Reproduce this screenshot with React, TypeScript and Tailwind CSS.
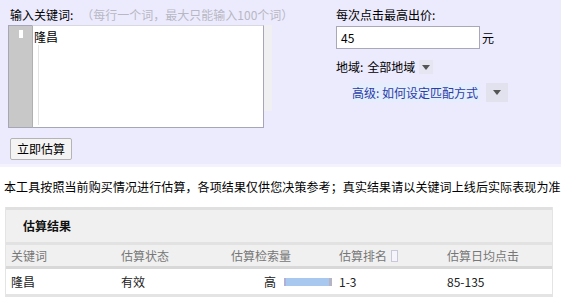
import React from "react";

const font = { fontFamily: '"Noto Sans CJK SC", "Noto Sans", sans-serif' };

function Arrow() {
  return (
    <svg width="8" height="5" viewBox="0 0 8 5" className="block">
      <path d="M0 0 L8 0 L4 5 Z" fill="#555" />
    </svg>
  );
}

export default function App() {
  return (
    <div className="w-[561px] h-[306px] overflow-hidden bg-white text-[12px] leading-[14px] text-black" style={font}>
      {/* top form area */}
      <div className="h-[167px] bg-[#ecebfd] flex pl-[8px] pt-[7px] border-b-[3px] border-[#f3f2fe]">
        <div className="w-[328px] flex flex-col">
          <div className="flex items-center h-[16px] pl-[2px]">
            <span>输入关键词:</span>
            <span className="ml-[8px] text-[#b8b8c4]">（每行一个词，最大只能输入100个词）</span>
          </div>
          <div className="mt-[2px] flex items-start">
            <div className="w-[24px] h-[103px] bg-[#c8c8c8] border border-r-0 border-[#a6a6b8] pt-[4px] flex justify-center">
              <div className="w-[4px] h-[8px] bg-white" />
            </div>
            <div className="w-[232px] h-[103px] bg-[#ffffff] border border-l-[#b0b0b0] border-[#a6a6b8] border-t-[#d8d8e0] pt-[4px] pl-[1px]">
              <div>隆昌</div>
              <div className="ml-[4px] mt-[1px] w-px h-[80px] bg-[#e4e4e4]" />
            </div>
            <div className="w-[8px] h-[86px] bg-[#f0f0f2]" />
          </div>
          <div className="mt-[10px] pl-[2px]">
            <button className="h-[22px] px-[6px] border border-[#b4b4b4] bg-[#f4f4f4] rounded-[2px] text-[12px] leading-[14px] text-black" style={font}>
              立即估算
            </button>
          </div>
        </div>
        <div className="flex flex-col">
          <div className="h-[16px] flex items-center">每次点击最高出价:</div>
          <div className="mt-[3px] flex items-center">
            <div className="w-[144px] h-[23px] border border-[#a8a8b8] bg-white flex items-center pl-[4px]">45</div>
            <span className="ml-[2px]">元</span>
          </div>
          <div className="mt-[10px] flex items-center h-[16px]">
            <span>地域:</span>
            <span className="ml-[4px]">全部地域</span>
            <span className="ml-[4px] w-[14px] h-[14px] flex items-center justify-center bg-[#e6e6f2]"><Arrow /></span>
          </div>
          <div className="mt-[8px] ml-[16px] flex items-center h-[19px]">
            <span className="bg-[#e4eefc] text-[#2c3ca8] h-[19px] flex items-center pr-[2px]">高级: 如何设定匹配方式</span>
            <span className="ml-[6px] w-[22px] h-[19px] flex items-center justify-center bg-[#e2e2ee]"><Arrow /></span>
          </div>
        </div>
      </div>

      {/* notice */}
      <div className="pl-[4px] pt-[13px] h-[40px] whitespace-nowrap tracking-[0.1px]">
        本工具按照当前购买情况进行估算，各项结果仅供您决策参考；真实结果请以关键词上线后实际表现为准
      </div>

      {/* results table */}
      <div className="ml-[5px] w-[548px] border-l border-r border-[#e4e4e4]">
        <div className="h-[3px] bg-[#e0e0e0]" />
        <div className="h-[32px] bg-[#f0f0f0] flex items-center pl-[17px] font-bold text-[12px] text-[#111]">估算结果</div>
        <div className="h-[3px] bg-[#e2e2e2]" />
        <div className="h-[24px] bg-[#f0f0f0] flex items-center text-[#777] border-b-[3px] border-[#d8d8d8]">
          <div className="w-[110px] pl-[5px]">关键词</div>
          <div className="w-[110px] pl-[5px]">估算状态</div>
          <div className="w-[108px] pl-[5px]">估算检索量</div>
          <div className="w-[108px] pl-[5px] flex items-center">
            估算排名
            <span className="ml-[4px] w-[7px] h-[12px] border border-[#c8c8d8] bg-[#f4f4fa]" />
          </div>
          <div className="flex-1 pl-[5px]">估算日均点击</div>
        </div>
        <div className="h-[28px] bg-white flex items-center text-[#222] border-b-[3px] border-[#e4e4e4]">
          <div className="w-[110px] pl-[5px]">隆昌</div>
          <div className="w-[110px] pl-[5px]">有效</div>
          <div className="w-[108px] flex items-center justify-end pr-[2px]">
            <span>高</span>
            <span className="ml-[8px] w-[48px] h-[8px] bg-[#a8c8f0] border-l-[2px] border-r-[3px] border-l-[#b0b0d8] border-r-[#b4b4c4]" />
          </div>
          <div className="w-[108px] pl-[5px]">1-3</div>
          <div className="flex-1 pl-[5px]">85-135</div>
        </div>
      </div>
    </div>
  );
}
